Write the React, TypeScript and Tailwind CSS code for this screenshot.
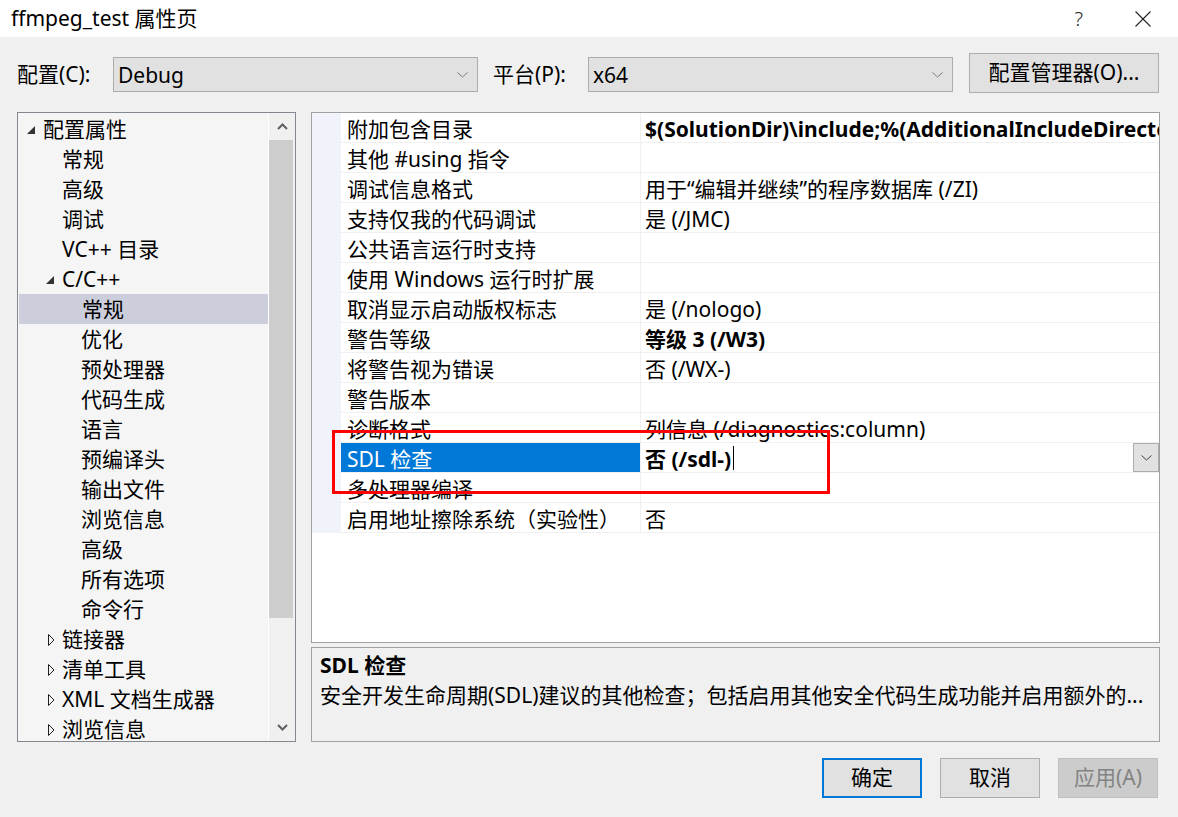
import React from "react";

type TreeItem = { t: string; lvl: 0 | 1 | 2; tri?: "open" | "closed"; sel?: boolean };

const tree: TreeItem[] = [
  { t: "配置属性", lvl: 0, tri: "open" },
  { t: "常规", lvl: 1 },
  { t: "高级", lvl: 1 },
  { t: "调试", lvl: 1 },
  { t: "VC++ 目录", lvl: 1 },
  { t: "C/C++", lvl: 1, tri: "open" },
  { t: "常规", lvl: 2, sel: true },
  { t: "优化", lvl: 2 },
  { t: "预处理器", lvl: 2 },
  { t: "代码生成", lvl: 2 },
  { t: "语言", lvl: 2 },
  { t: "预编译头", lvl: 2 },
  { t: "输出文件", lvl: 2 },
  { t: "浏览信息", lvl: 2 },
  { t: "高级", lvl: 2 },
  { t: "所有选项", lvl: 2 },
  { t: "命令行", lvl: 2 },
  { t: "链接器", lvl: 1, tri: "closed" },
  { t: "清单工具", lvl: 1, tri: "closed" },
  { t: "XML 文档生成器", lvl: 1, tri: "closed" },
  { t: "浏览信息", lvl: 1, tri: "closed" },
];

type Row = { n: string; v: string; bold?: boolean; sel?: boolean };

const rows: Row[] = [
  { n: "附加包含目录", v: "$(SolutionDir)\\include;%(AdditionalIncludeDirectories)", bold: true },
  { n: "其他 #using 指令", v: "" },
  { n: "调试信息格式", v: "用于“编辑并继续”的程序数据库 (/ZI)" },
  { n: "支持仅我的代码调试", v: "是 (/JMC)" },
  { n: "公共语言运行时支持", v: "" },
  { n: "使用 Windows 运行时扩展", v: "" },
  { n: "取消显示启动版权标志", v: "是 (/nologo)" },
  { n: "警告等级", v: "等级 3 (/W3)", bold: true },
  { n: "将警告视为错误", v: "否 (/WX-)" },
  { n: "警告版本", v: "" },
  { n: "诊断格式", v: "列信息 (/diagnostics:column)" },
  { n: "SDL 检查", v: "否 (/sdl-)", bold: true, sel: true },
  { n: "多处理器编译", v: "" },
  { n: "启用地址擦除系统（实验性）", v: "否" },
];

const lvlPad: Record<number, string> = {
  0: "pl-[9px]",
  1: "pl-[28px]",
  2: "pl-[47px]",
};

function Chevron({ color = "#606060" }: { color?: string }) {
  return (
    <svg width="11" height="6" viewBox="0 0 11 6">
      <polyline points="0.5,0.5 5.5,5 10.5,0.5" fill="none" stroke={color} strokeWidth="1" />
    </svg>
  );
}

function Combo({ text }: { text: string }) {
  return (
    <div className="mt-[4px] flex h-[35px] w-[365px] items-center justify-between border border-[#adadad] bg-[#e1e1e1] pl-[4px] pr-[9px]">
      <span className="pt-[2px] text-[21px] leading-none text-black">{text}</span>
      <Chevron color="#7a7a7a" />
    </div>
  );
}

export default function App() {
  return (
    <div className="relative h-[817px] w-[1178px] overflow-hidden bg-[#f0f0f0] font-['Noto_Sans','Noto_Sans_CJK_SC',sans-serif] text-black">
      {/* Title bar */}
      <div className="flex h-[37px] items-center justify-between bg-white pl-[11px]">
        <span className="text-[21px] leading-none">ffmpeg_test 属性页</span>
        <div className="flex h-full items-center">
          <span className="mr-[52px] text-[20px] font-light leading-none text-[#222]">?</span>
          <svg width="16" height="16" viewBox="0 0 16 16" className="mr-[27px]">
            <line x1="0.5" y1="0.5" x2="15.5" y2="15.5" stroke="#222" strokeWidth="1.1" />
            <line x1="15.5" y1="0.5" x2="0.5" y2="15.5" stroke="#222" strokeWidth="1.1" />
          </svg>
        </div>
      </div>

      {/* Config row */}
      <div className="mt-[16px] flex h-[40px] items-start px-[17px]">
        <div className="flex h-[43px] w-[96px] items-center text-[21px]">配置(C):</div>
        <Combo text="Debug" />
        <div className="ml-[15px] flex h-[43px] w-[95px] items-center text-[21px]">平台(P):</div>
        <Combo text="x64" />
        <div className="ml-[16px] flex h-[40px] w-[190px] items-center justify-center border border-[#adadad] bg-[#e1e1e1] text-[21px]">
          配置管理器(O)...
        </div>
      </div>

      {/* Main area */}
      <div className="mt-[19px] flex h-[630px] gap-[15px] px-[17px]">
        {/* Tree */}
        <div className="flex h-[630px] w-[279px] border border-[#828790] bg-[#f5f5f5]">
          <div className="w-[250px] overflow-hidden pt-[1px]">
            {tree.map((it, i) => (
              <div
                key={i}
                className={`flex h-[30px] items-center text-[21px] ${lvlPad[it.lvl]} ${
                  it.sel ? "ml-[1px] bg-[#cccedb] pl-[46px]" : ""
                }`}
              >
                <span className="flex w-[16px] shrink-0 items-center">
                  {it.tri === "open" && (
                    <svg width="8" height="8" viewBox="0 0 8 8" className="mt-[2px]">
                      <polygon points="8,0 8,8 0,8" fill="#333" />
                    </svg>
                  )}
                  {it.tri === "closed" && (
                    <svg width="7" height="12" viewBox="0 0 7 12" className="ml-[2px] mt-[1px]">
                      <polygon points="0.5,0.5 6,6 0.5,11.5" fill="none" stroke="#1e1e1e" strokeWidth="1" />
                    </svg>
                  )}
                </span>
                <span className="whitespace-nowrap leading-none">{it.t}</span>
              </div>
            ))}
          </div>
          <div className="flex w-[27px] flex-col border-l border-white bg-[#f0f0f0]">
            <div className="flex h-[27px] items-center justify-center">
              <svg width="11" height="7" viewBox="0 0 11 7">
                <polyline points="1,6 5.5,1.5 10,6" fill="none" stroke="#606060" strokeWidth="2" />
              </svg>
            </div>
            <div className="mr-[2px] h-[478px] bg-[#cdcdcd]" />
            <div className="flex-1" />
            <div className="flex h-[27px] items-center justify-center">
              <svg width="11" height="7" viewBox="0 0 11 7">
                <polyline points="1,1 5.5,5.5 10,1" fill="none" stroke="#606060" strokeWidth="2" />
              </svg>
            </div>
          </div>
        </div>

        {/* Right column */}
        <div className="flex w-[849px] flex-col gap-[4px]">
          <div className="relative h-[531px] border border-[#a0a0a0] bg-white">
            {rows.map((r, i) => (
              <div key={i} className="flex h-[30px]">
                <div className="w-[29px] shrink-0 bg-[#f0f4fa]" />
                <div
                  className={`flex w-[300px] shrink-0 items-center border-r border-b border-[#f0f0f0] pl-[6px] pt-[3px] text-[21px] whitespace-nowrap ${
                    r.sel ? "bg-[#0078d7] text-white" : ""
                  }`}
                >
                  <span className="leading-none">{r.n}</span>
                </div>
                <div className="flex min-w-0 flex-1 items-center overflow-hidden border-b border-[#f0f0f0] pl-[4px] text-[21px] whitespace-nowrap">
                  <span className={`pt-[3px] leading-none ${r.bold ? "font-bold" : ""}`}>{r.v}</span>
                  {r.sel && (
                    <>
                      <span className="ml-[2px] h-[24px] w-[1px] bg-black" />
                      <span className="flex-1" />
                      <span className="flex h-[29px] w-[26px] items-center justify-center border border-[#adadad] bg-[#e1e1e1]">
                        <Chevron color="#444" />
                      </span>
                    </>
                  )}
                </div>
              </div>
            ))}
            <div className="absolute left-[20px] top-[317px] h-[64px] w-[498px] border-[3px] border-[#ff0000]" />
          </div>
          <div className="h-[95px] border border-[#a0a0a0] bg-[#f0f0f0] pl-[8px] pt-[2px]">
            <div className="flex h-[30px] items-center text-[21px] font-bold leading-none">SDL 检查</div>
            <div className="flex h-[30px] items-center text-[21px] leading-none whitespace-nowrap">
              安全开发生命周期(SDL)建议的其他检查；包括启用其他安全代码生成功能并启用额外的...
            </div>
          </div>
        </div>
      </div>

      {/* Buttons */}
      <div className="mt-[16px] flex justify-end gap-[18px] pr-[20px]">
        <div className="flex h-[40px] w-[100px] items-center justify-center border-2 border-[#0078d7] bg-[#e1e1e1] text-[21px]">
          确定
        </div>
        <div className="flex h-[40px] w-[100px] items-center justify-center border border-[#adadad] bg-[#e1e1e1] text-[21px]">
          取消
        </div>
        <div className="flex h-[40px] w-[100px] items-center justify-center border border-[#bfbfbf] bg-[#cccccc] text-[21px] text-[#838383]">
          应用(A)
        </div>
      </div>
    </div>
  );
}
